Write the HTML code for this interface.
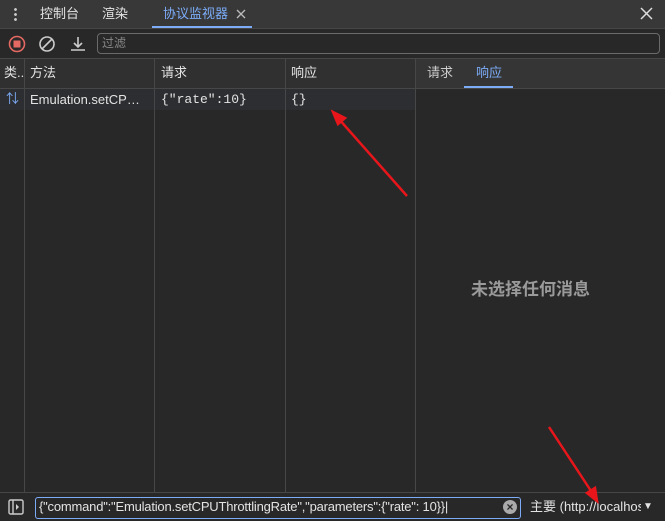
<!DOCTYPE html>
<html><head><meta charset="utf-8"><style>
body{margin:0;width:665px;height:520px;background:#282828;font-family:"Liberation Sans","Noto Sans CJK SC",sans-serif;color:#e3e3e3;font-size:12px;line-height:16px;position:relative;overflow:hidden}
.a{position:absolute}
.mono{font-family:"Liberation Mono","Noto Sans CJK SC",monospace}
</style></head><body>
<div class="a" style="left:0;top:0;width:665px;height:28px;background:#383838;border-bottom:1px solid #474747"></div>
<div class="a" style="left:14px;top:7px;width:3px;height:14px;background:radial-gradient(circle,#ccc 1.2px,transparent 1.6px) 0 0/3px 5px"></div>
<div class="a" style="left:40px;top:6px;font-size:13px">控制台</div>
<div class="a" style="left:102px;top:6px;font-size:13px">渲染</div>
<div class="a" style="left:163px;top:6px;font-size:13px;color:#7cacf8">协议监视器</div>
<svg class="a" style="left:236px;top:9px" width="10" height="10"><path d="M1 1l8 8M9 1l-8 8" stroke="#bbb" stroke-width="1.3"/></svg>
<div class="a" style="left:152px;top:26px;width:100px;height:2px;background:#7cacf8"></div>
<svg class="a" style="left:640px;top:7px" width="13" height="13"><path d="M1 1l11 11M12 1l-11 11" stroke="#ddd" stroke-width="1.5"/></svg>
<!-- toolbar -->
<svg class="a" style="left:7px;top:34px" width="20" height="20"><circle cx="10" cy="10" r="7.5" fill="none" stroke="#e46962" stroke-width="1.6"/><rect x="6.5" y="6.5" width="7" height="7" fill="#e46962"/></svg>
<svg class="a" style="left:37px;top:34px" width="20" height="20"><circle cx="10" cy="10" r="7" fill="none" stroke="#ccc" stroke-width="1.6"/><line x1="5" y1="15" x2="15" y2="5" stroke="#ccc" stroke-width="1.6"/></svg>
<svg class="a" style="left:68px;top:34px" width="20" height="20"><path d="M10 3v10M6 9l4 4 4-4M3 16h14" fill="none" stroke="#ccc" stroke-width="1.6"/></svg>
<div class="a" style="left:97px;top:33px;width:561px;height:19px;border:1px solid #6a6a6a;border-radius:4px;background:#282828"></div>
<div class="a" style="left:102px;top:35px;color:#888;font-size:12px">过滤</div>
<div class="a" style="left:0;top:58px;width:665px;height:1px;background:#474747"></div>
<!-- table header -->
<div class="a" style="left:0;top:59px;width:415px;height:29px;background:#303030;border-bottom:1px solid #474747"></div>
<div class="a" style="left:415px;top:59px;width:250px;height:29px;background:#353535;border-bottom:1px solid #474747;border-left:1px solid #474747"></div>
<div class="a" style="left:4px;top:65px;font-size:13px">类..</div>
<div class="a" style="left:30px;top:65px;font-size:13px">方法</div>
<div class="a" style="left:161px;top:65px;font-size:13px">请求</div>
<div class="a" style="left:291px;top:65px;font-size:13px">响应</div>
<div class="a" style="left:427px;top:65px;font-size:13px;color:#ccc">请求</div>
<div class="a" style="left:476px;top:65px;font-size:13px;color:#7cacf8">响应</div>
<div class="a" style="left:464px;top:86px;width:49px;height:2px;background:#7cacf8"></div>
<!-- row -->
<div class="a" style="left:0;top:89px;width:415px;height:21px;background:#2d2e31"></div>
<div class="a" style="left:6px;top:91px;color:#7cacf8;font-size:13px">⇅</div>
<div class="a" style="left:30px;top:92px;font-size:13px">Emulation.setCP…</div>
<div class="a mono" style="left:161px;top:92px;font-size:13px">{"rate":10}</div>
<div class="a mono" style="left:291px;top:92px;font-size:13px">{}</div>
<!-- column lines -->
<div class="a" style="left:24px;top:59px;width:1px;height:433px;background:#474747"></div>
<div class="a" style="left:154px;top:59px;width:1px;height:433px;background:#474747"></div>
<div class="a" style="left:285px;top:59px;width:1px;height:433px;background:#474747"></div>
<div class="a" style="left:415px;top:59px;width:1px;height:433px;background:#474747"></div>
<div class="a" style="left:471px;top:280px;font-size:17px;line-height:20px;font-weight:bold;color:#9a9a9a">未选择任何消息</div>
<!-- bottom -->
<div class="a" style="left:0;top:492px;width:665px;height:28px;background:#282828;border-top:1px solid #474747"></div>
<svg class="a" style="left:8px;top:499px" width="16" height="16"><rect x="1" y="1" width="14" height="14" rx="1.5" fill="none" stroke="#ccc" stroke-width="1.4"/><line x1="5" y1="1" x2="5" y2="15" stroke="#ccc" stroke-width="1.4"/><path d="M8 5l3 3-3 3z" fill="#ccc"/></svg>
<div class="a" style="left:35px;top:497px;width:484px;height:20px;border:1px solid #7cacf8;border-radius:3px"></div>
<div class="a" style="left:39px;top:499px;font-size:13px;white-space:nowrap;letter-spacing:-0.2px">{"command":"Emulation.setCPUThrottlingRate","parameters":{"rate": 10}}|</div>
<div class="a" style="left:503px;top:500px;width:14px;height:14px;border-radius:7px;background:#aaa;color:#282828;font-size:12px;line-height:14px;text-align:center;font-weight:bold">×</div>
<div class="a" style="left:530px;top:499px;font-size:13px;white-space:nowrap;width:111px;overflow:hidden">主要 (http://localhost</div>
<div class="a" style="left:643px;top:499px;font-size:10px">▼</div>
<!-- arrows -->
<svg class="a" style="left:0;top:0" width="665" height="520"><g stroke="#e8161b" stroke-width="2.5" fill="#e8161b"><line x1="407" y1="196" x2="338" y2="118"/><path d="M333 112l12 6-7 6z"/><line x1="549" y1="427" x2="593" y2="494"/><path d="M597 501l-10-8 8-5z"/></g></svg>
</body></html>
